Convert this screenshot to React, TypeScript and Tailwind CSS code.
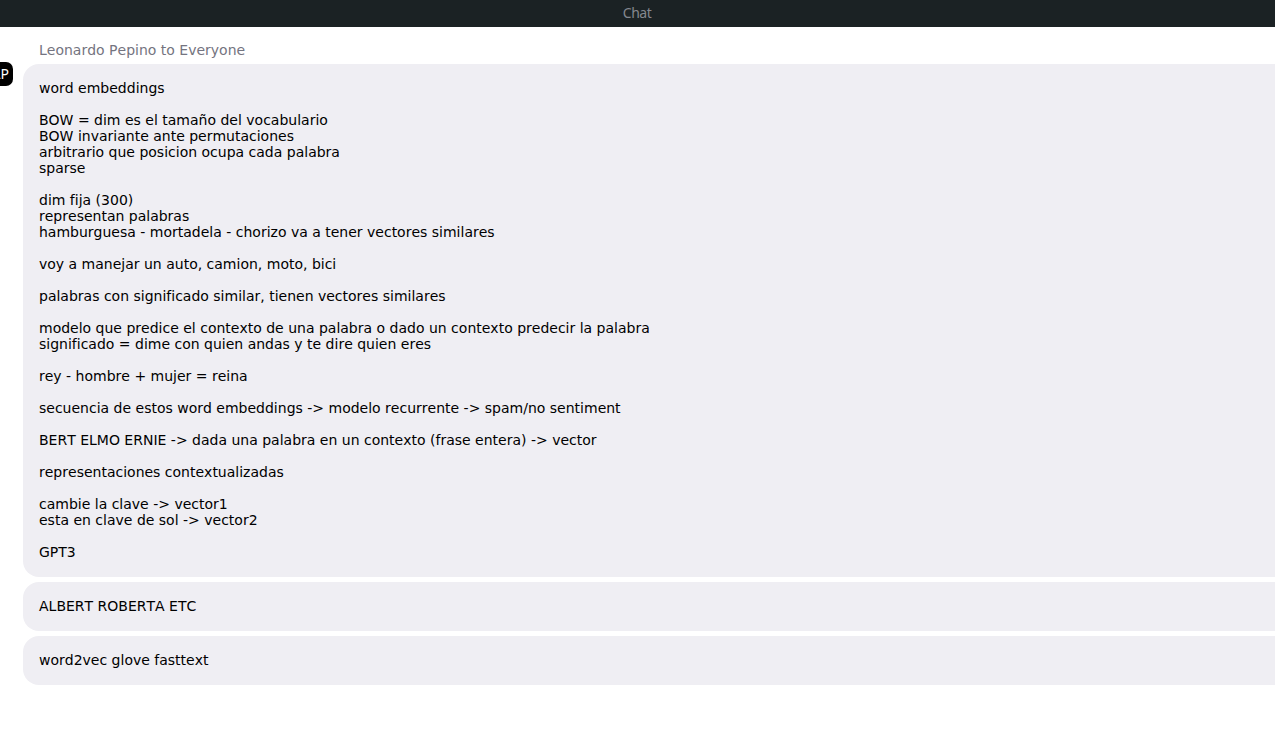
const messages = [
`word embeddings

BOW = dim es el tamaño del vocabulario
BOW invariante ante permutaciones
arbitrario que posicion ocupa cada palabra
sparse

dim fija (300)
representan palabras
hamburguesa - mortadela - chorizo va a tener vectores similares

voy a manejar un auto, camion, moto, bici

palabras con significado similar, tienen vectores similares

modelo que predice el contexto de una palabra o dado un contexto predecir la palabra
significado = dime con quien andas y te dire quien eres

rey - hombre + mujer = reina

secuencia de estos word embeddings -> modelo recurrente -> spam/no sentiment

BERT ELMO ERNIE -> dada una palabra en un contexto (frase entera) -> vector

representaciones contextualizadas

cambie la clave -> vector1
esta en clave de sol -> vector2

GPT3`,
  'ALBERT ROBERTA ETC',
  'word2vec glove fasttext',
];

export default function App() {
  return (
    <div className="flex h-[729px] w-full flex-col overflow-hidden bg-white font-['DejaVu_Sans',sans-serif] text-[14px] leading-4 text-black [font-kerning:none] [font-variant-ligatures:none]">
      <header className="flex h-[27px] shrink-0 items-center justify-center bg-[#1b2224] pr-px pb-[2px] font-['Noto_Sans',sans-serif] text-[14px] tracking-[-0.5px] text-[#84888f]">
        Chat
      </header>
      <main className="flex">
        <div className="flex w-[23px] shrink-0 justify-end pt-[35px] pr-[10px]">
          <div className="flex h-6 w-6 shrink-0 items-center justify-end rounded-[7px] bg-black pr-[4px] font-['Noto_Sans',sans-serif] text-[14px] text-white">
            LP
          </div>
        </div>
        <div className="min-w-0 flex-1 pt-[15px]">
          <div className="mb-[6px] pl-4 text-[#747480]">Leonardo Pepino to Everyone</div>
          <div className="flex flex-col gap-[5px]">
            {messages.map((message) => (
              <div key={message} className="rounded-l-2xl bg-[#efeef3] px-4 pt-4 pb-[17px] whitespace-pre">
                {message}
              </div>
            ))}
          </div>
        </div>
      </main>
    </div>
  );
}
